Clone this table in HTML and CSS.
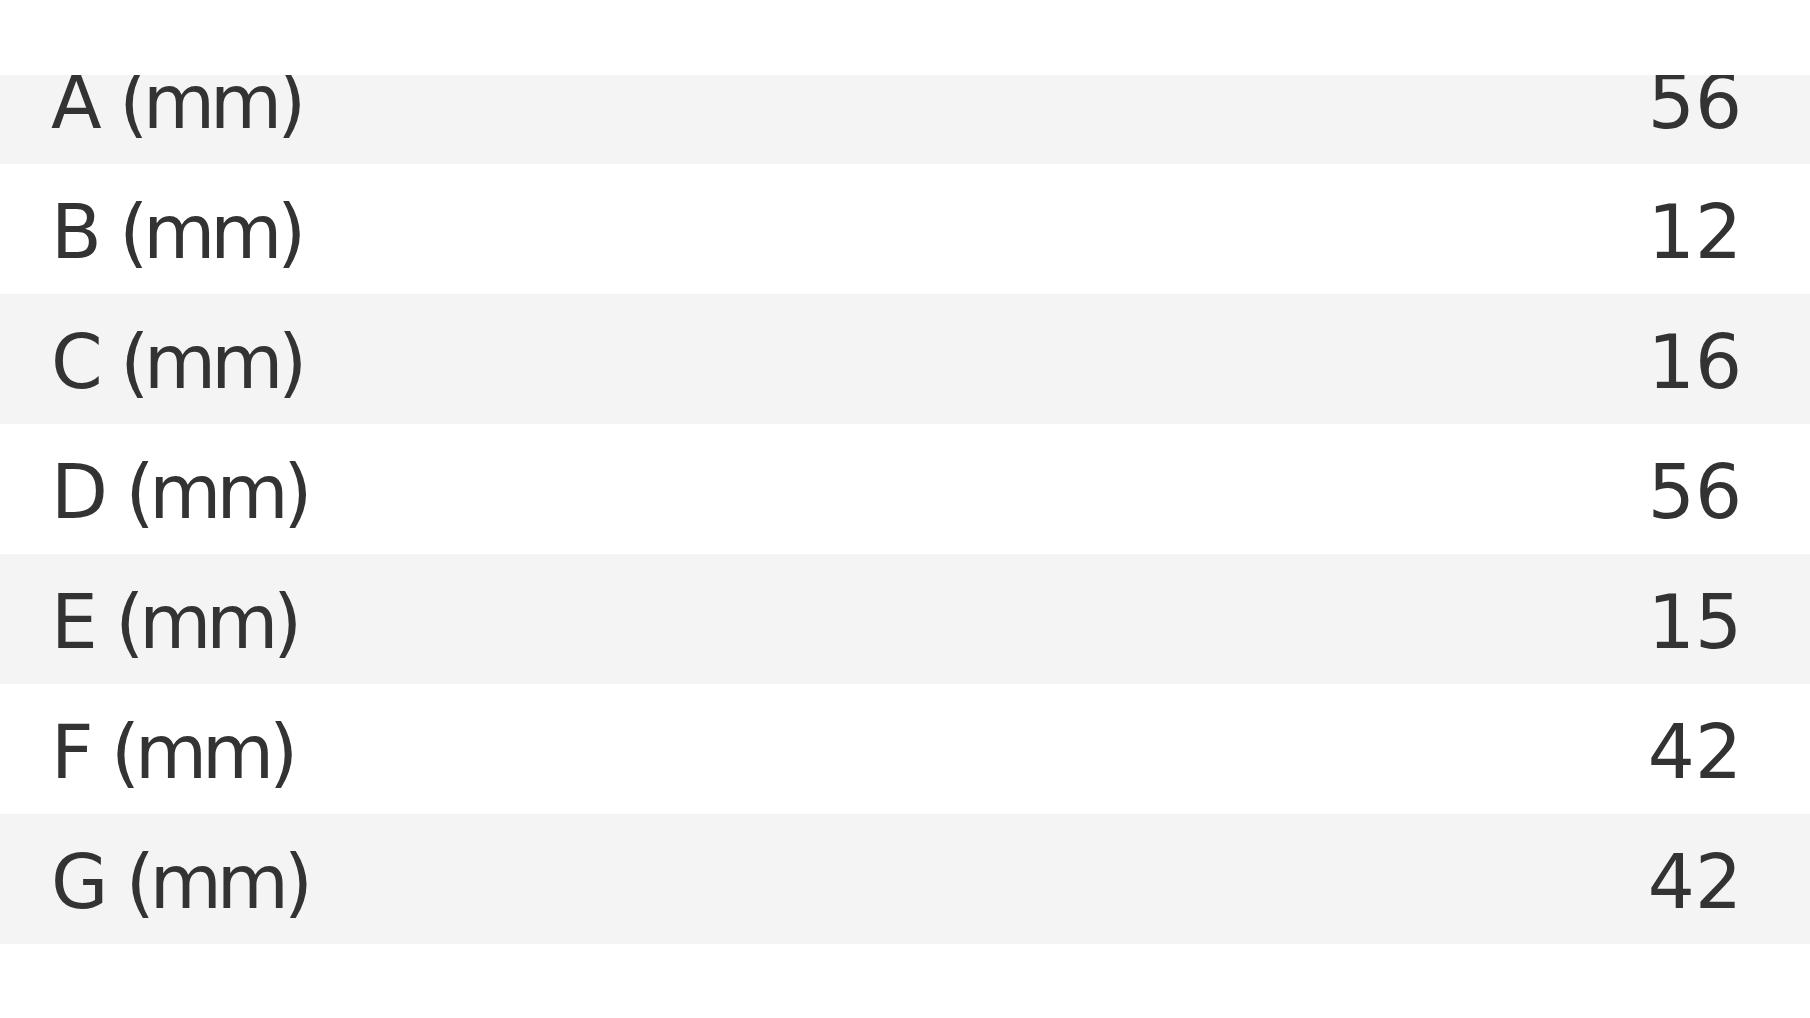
FILE: index.html
```html
<!DOCTYPE html>
<html lang="en">
  <head>
    <meta charset="UTF-8" />
    <meta name="viewport" content="width=device-width, initial-scale=1.0" />
    <title>Dimensions</title>
    <link rel="stylesheet" href="styles.css">
  </head>
  <body>
    <div class="spec-top"></div>
    <div class="spec-scroll">
      <table class="spec-table">
        <tbody>
          <tr><td class="label">A (mm)</td><td class="value">56</td></tr>
          <tr><td class="label">B (mm)</td><td class="value">12</td></tr>
          <tr><td class="label">C (mm)</td><td class="value">16</td></tr>
          <tr><td class="label">D (mm)</td><td class="value">56</td></tr>
          <tr><td class="label">E (mm)</td><td class="value">15</td></tr>
          <tr><td class="label">F (mm)</td><td class="value">42</td></tr>
          <tr><td class="label">G (mm)</td><td class="value">42</td></tr>
        </tbody>
      </table>
    </div>
  </body>
</html>
```

FILE: styles.css
```css
/* Base */
html,
body {
  margin: 0;
  padding: 0;
  width: 100%;
  height: 100%;
  background-color: #fff;
  font-family: "DejaVu Sans", "Liberation Sans", sans-serif;
  color: #333;
}

/* White band above the list (the list is scrolled under it) */
.spec-top {
  height: 75px;
}

.spec-scroll {
  overflow: hidden;
}

/* Dimension table */
.spec-table {
  width: 100%;
  border-collapse: collapse;
  margin-top: -41px; /* first row partly scrolled away */
  font-size: 74px;
  line-height: 1.2;
}

.spec-table td {
  height: 123px;
  padding: 7px 0 0;
  vertical-align: middle;
}

.spec-table tr:nth-child(odd) {
  background-color: #f4f4f4;
}

.spec-table .label {
  padding-left: 51px;
  text-align: left;
  letter-spacing: -5px;
  word-spacing: 4px;
}

.spec-table .value {
  padding-right: 68px;
  text-align: right;
}
```
